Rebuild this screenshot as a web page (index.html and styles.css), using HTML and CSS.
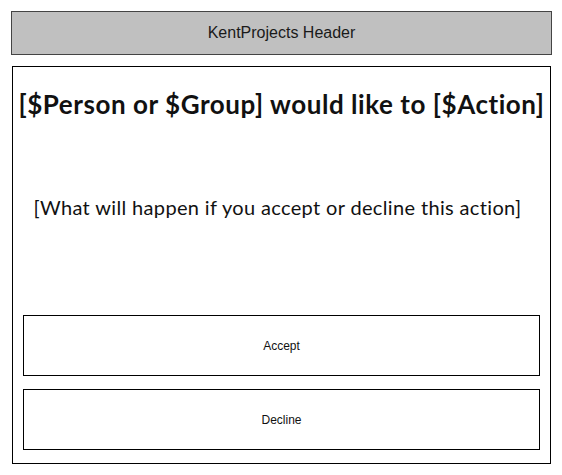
FILE: index.html
```html
<!DOCTYPE html>
<html>
<head>
<meta charset="utf-8">
<link rel="stylesheet" href="styles.css">
</head>
<body>
<div class="page">
  <header class="header">KentProjects Header</header>
  <main class="card">
    <h1 class="title">[$Person or $Group] would like to [$Action]</h1>
    <p class="desc">[What will happen if you accept or decline this action]</p>
    <div class="actions">
      <button class="btn">Accept</button>
      <button class="btn">Decline</button>
    </div>
  </main>
</div>
</body>
</html>
```

FILE: styles.css
```css
html, body {
  margin: 0;
  padding: 0;
  background: #ffffff;
}
.page {
  width: 562px;
  height: 475px;
  box-sizing: border-box;
  padding: 11px 10px 11px 11px;
  display: flex;
  flex-direction: column;
  gap: 11px;
}
.header {
  height: 44px;
  box-sizing: border-box;
  background: #c0c0c0;
  border: 1px solid #444444;
  display: flex;
  align-items: center;
  justify-content: center;
  font-family: "Liberation Sans", Arial, sans-serif;
  font-size: 16px;
  color: #1a1a1a;
}
.card {
  margin: 0 1px;
  height: 398px;
  box-sizing: border-box;
  border: 1px solid #000000;
  display: flex;
  flex-direction: column;
  padding: 0 4px 13px 4px;
}
.title {
  margin: 22px 0 0 0;
  text-align: center;
  font-family: Lato, "Open Sans", sans-serif;
  font-weight: 700;
  font-size: 26px;
  letter-spacing: 0.55px;
  line-height: 30px;
  color: #111111;
  white-space: nowrap;
}
.desc {
  margin: 76px 0 0 0;
  padding-right: 8px;
  text-align: center;
  font-family: Lato, "Open Sans", sans-serif;
  font-weight: 400;
  font-size: 20px;
  letter-spacing: 0.35px;
  line-height: 24px;
  color: #111111;
  white-space: nowrap;
}
.actions {
  margin-top: auto;
  padding: 0 6px;
  display: flex;
  flex-direction: column;
  gap: 13px;
}
.btn {
  height: 61px;
  box-sizing: border-box;
  background: #ffffff;
  border: 1px solid #000000;
  border-radius: 0;
  padding: 0;
  font-family: "Liberation Sans", Arial, sans-serif;
  font-size: 12px;
  color: #111111;
}
```
